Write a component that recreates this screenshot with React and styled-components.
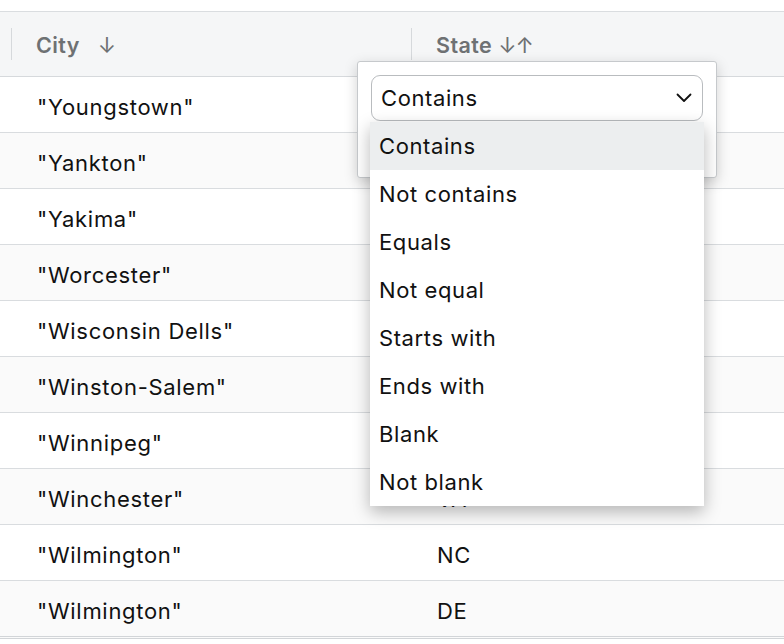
import styled, { createGlobalStyle } from 'styled-components'

const GlobalStyle = createGlobalStyle`
  html, body {
    margin: 0;
    padding: 0;
    background: #ffffff;
    font-family: Inter, "Noto Sans", "Liberation Sans", sans-serif;
    overflow: hidden;
  }
`

const rows = [
  ['"Youngstown"', 'OH'],
  ['"Yankton"', 'SD'],
  ['"Yakima"', 'WA'],
  ['"Worcester"', 'MA'],
  ['"Wisconsin Dells"', 'WI'],
  ['"Winston-Salem"', 'NC'],
  ['"Winnipeg"', 'MB'],
  ['"Winchester"', 'VA'],
  ['"Wilmington"', 'NC'],
  ['"Wilmington"', 'DE'],
]

const options = ['Contains', 'Not contains', 'Equals', 'Not equal', 'Starts with', 'Ends with', 'Blank', 'Not blank']

export default function App() {
  return (
    <>
      <GlobalStyle />
      <Page>
        <Grid>
          <HeaderRow>
            <span />
            <HeaderCell>City <Arrow>↓</Arrow></HeaderCell>
            <HeaderCell>State <Arrow tight>↓↑</Arrow></HeaderCell>
          </HeaderRow>
          {rows.map(([city, state], i) => (
            <Row key={i} striped={i % 2 === 1}>
              <span />
              <Cell>{city}</Cell>
              <Cell>{state}</Cell>
            </Row>
          ))}
        </Grid>

        <FilterPanel>
          <Select>
            <span>Contains</span>
            <svg width="16" height="10" viewBox="0 0 16 10">
              <path d="M1.5 1.5 L8 8 L14.5 1.5" fill="none" stroke="#111" strokeWidth="1.8" strokeLinecap="round" strokeLinejoin="round" />
            </svg>
          </Select>
          <OptionList>
            {options.map((o, i) => (
              <Option key={o} active={i === 0}>{o}</Option>
            ))}
          </OptionList>
        </FilterPanel>
      </Page>
    </>
  )
}

const Page = styled.div`
  position: relative;
  width: 784px;
  height: 644px;
  padding-top: 11px;
  box-sizing: border-box;
`

const Grid = styled.div`
  border-top: 1px solid #dadde0;
`

const HeaderRow = styled.div`
  display: grid;
  grid-template-columns: 11px 400px 1fr;
  height: 64px;
  background: #f5f6f7;
  border-bottom: 1px solid #d6d9dc;
`

const HeaderCell = styled.div`
  display: flex;
  align-items: center;
  padding-left: 25px;
  padding-top: 1px;
  font-size: 21.5px;
  font-weight: 600;
  letter-spacing: 0.4px;
  color: #6e7173;
  position: relative;
  &::before {
    content: '';
    position: absolute;
    left: 0;
    top: 16px;
    height: 32px;
    width: 1px;
    background: #d6d9dc;
  }
`

const Arrow = styled.span`
  margin-left: ${p => (p.tight ? '6px' : '18px')};
  font-weight: 400;
  font-size: 22px;
  letter-spacing: ${p => (p.tight ? '-1px' : '0')};
`

const Row = styled.div`
  display: grid;
  grid-template-columns: 11px 400px 1fr;
  height: 55px;
  background: ${p => (p.striped ? '#fafafa' : '#ffffff')};
  border-bottom: 1px solid #d9dcdf;
  &:last-child {
    border-bottom: 3px double #d2d5d8;
  }
`

const Cell = styled.div`
  display: flex;
  align-items: center;
  padding-left: 26px;
  padding-top: 4px;
  font-size: 22px;
  letter-spacing: 0.7px;
  color: #111;
`

const FilterPanel = styled.div`
  position: absolute;
  left: 357px;
  top: 61px;
  width: 332px;
  height: 89px;
  padding: 13px;
  background: #ffffff;
  border: 1px solid #c6c9cc;
  border-radius: 3px;
  box-shadow: 0 4px 14px rgba(0, 0, 0, 0.18);
`

const Select = styled.div`
  display: flex;
  align-items: center;
  justify-content: space-between;
  height: 46px;
  box-sizing: border-box;
  padding: 0 10px 0 9px;
  border: 1.5px solid #b9bcbf;
  border-radius: 9px;
  font-size: 22px;
  letter-spacing: 0.6px;
  color: #111;
`

const OptionList = styled.div`
  position: absolute;
  left: 12px;
  top: 60px;
  width: 334px;
  background: #ffffff;
  box-shadow: 0 6px 16px rgba(0, 0, 0, 0.28);
  z-index: 2;
`

const Option = styled.div`
  height: 48px;
  display: flex;
  align-items: center;
  padding-left: 9px;
  font-size: 22px;
  letter-spacing: 0.6px;
  color: #111;
  background: ${p => (p.active ? '#eceeef' : '#ffffff')};
`
